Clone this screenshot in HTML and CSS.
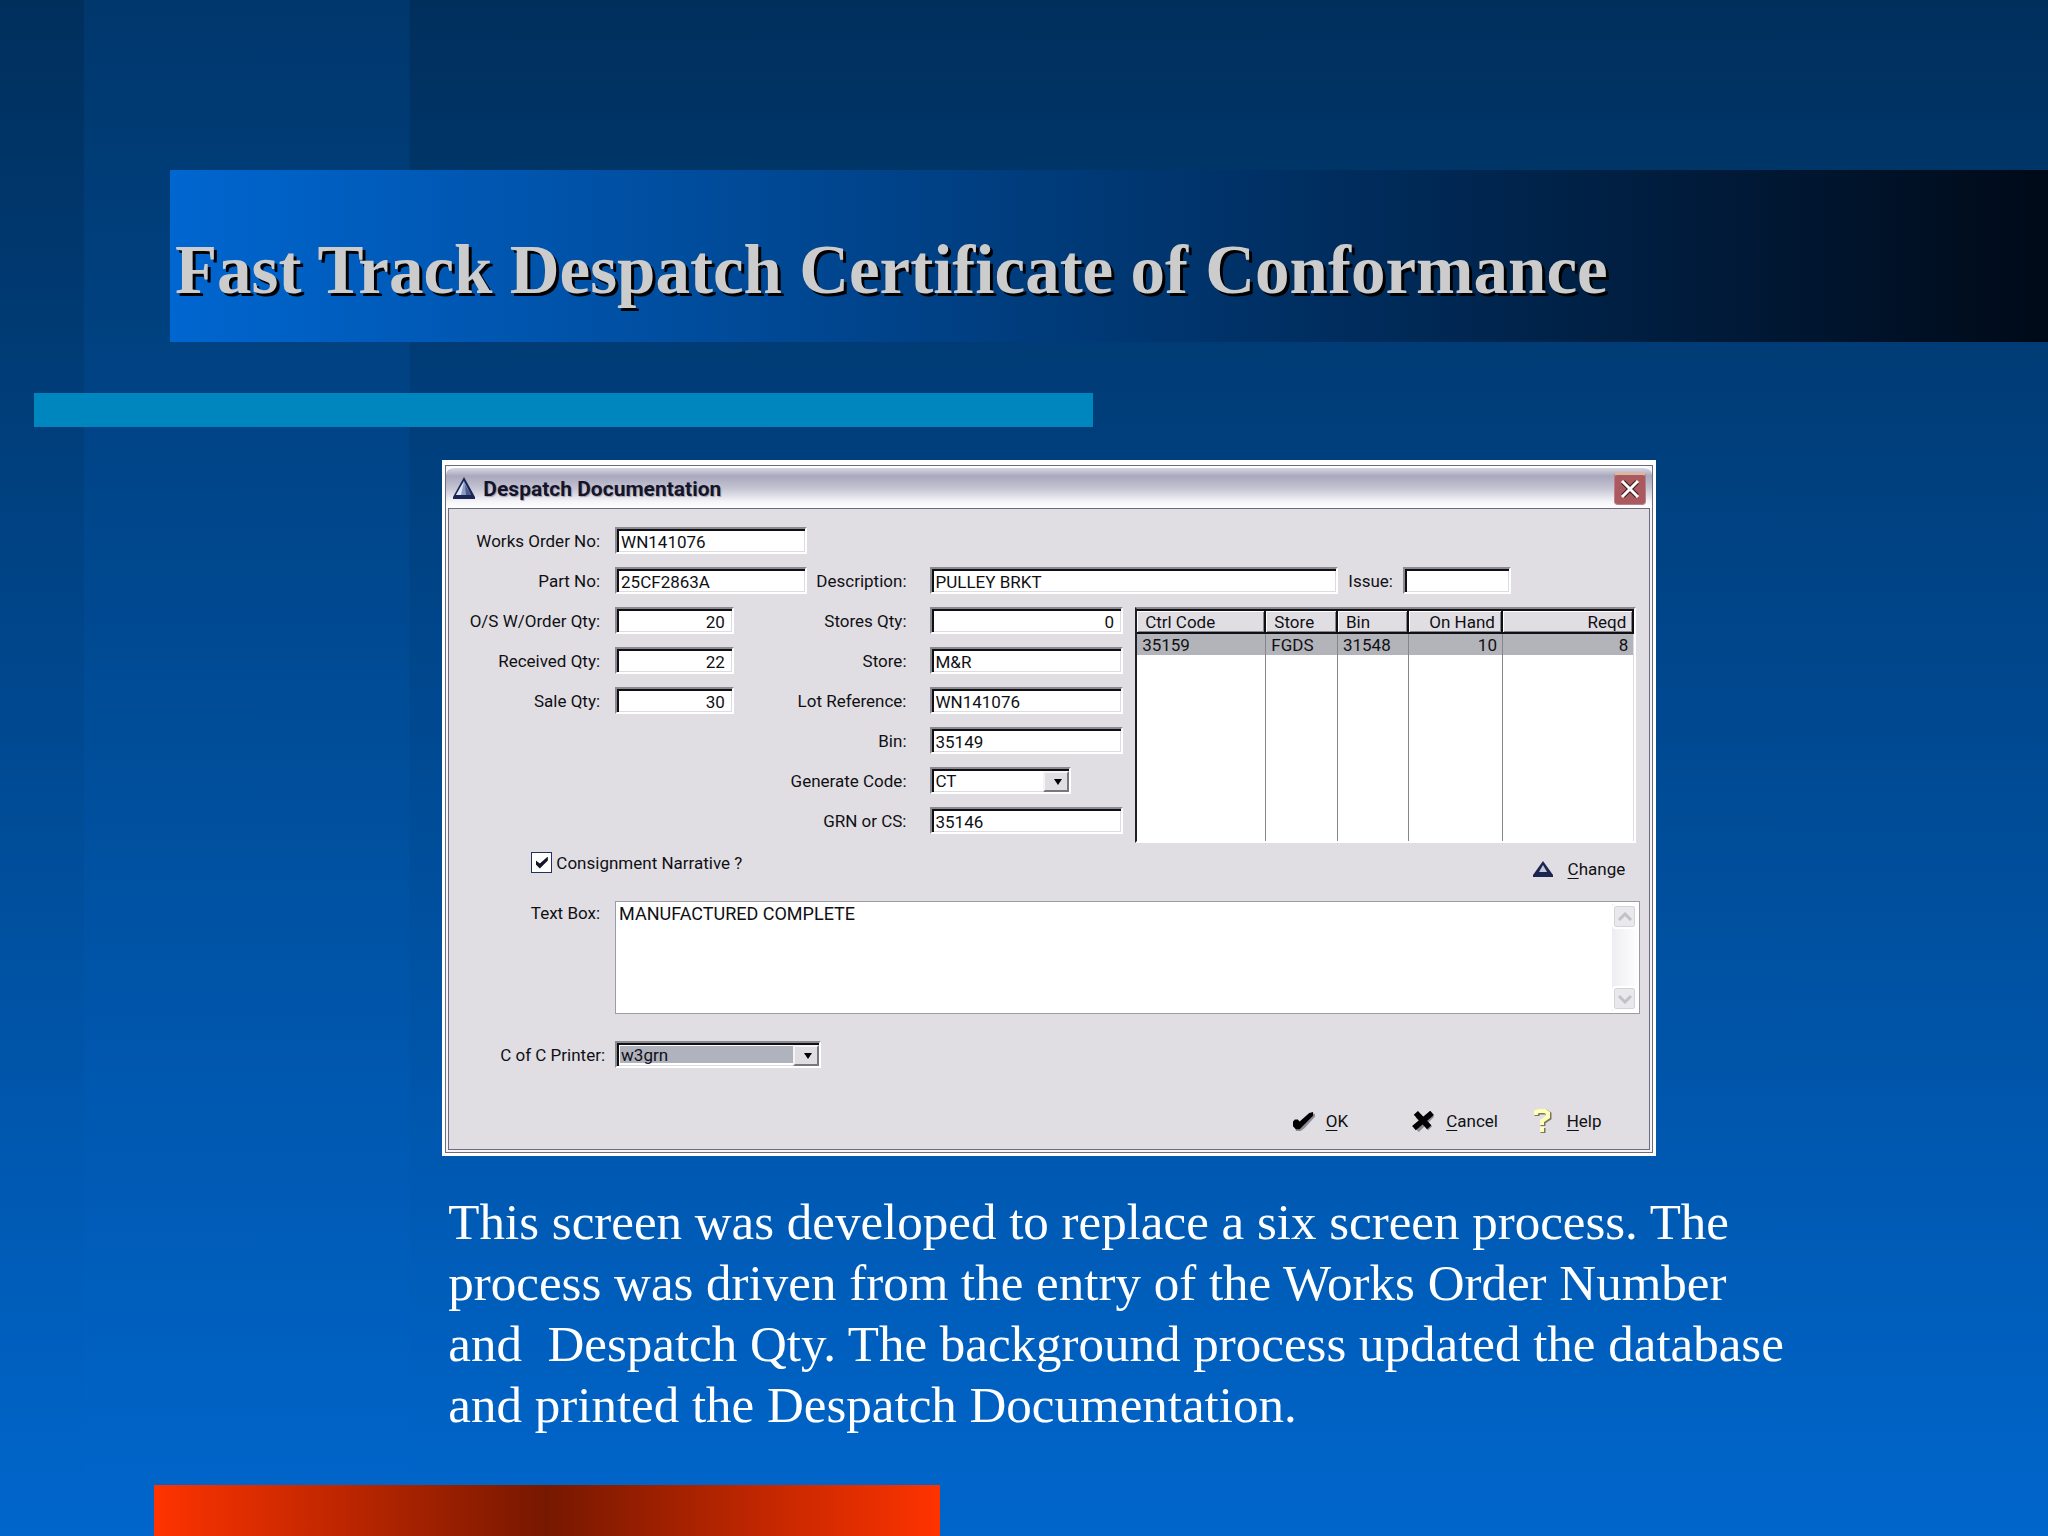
FILE: index.html
```html
<!DOCTYPE html>
<html lang="en">

<head>
	<meta charset="UTF-8">
	<meta name="viewport" content="width=device-width, initial-scale=1.0">
	<title>Fast Track Despatch Certificate of Conformance</title>
	<link rel="stylesheet" href="styles.css">
</head>

<body>
	<div class="slide">
		<header class="banner">
			<h1>Fast Track Despatch Certificate of Conformance</h1>
		</header>
		<div class="rule"></div>

		<main>
			<section class="dialog">
				<div class="frame">
					<div class="titlebar">
						<svg class="logo" viewBox="0 0 22 22">
							<path d="M11 0L22 20V22H0V20Z" fill="#1c2656" />
							<path d="M11 4L18 18H3Z" fill="#8d9cc4" />
							<path d="M11 4L3 18H8Z" fill="#dfe6f4" />
							<path d="M12 8L18 18H13Z" fill="#4a5a8e" />
						</svg>
						<h2>Despatch Documentation</h2>
						<button class="close" type="button" aria-label="Close">
							<svg viewBox="0 0 20 20">
								<path d="M3 3L17 17M17 3L3 17" stroke="#3c1418" stroke-width="5" />
								<path d="M2 2L18 18M18 2L2 18" stroke="#fff" stroke-width="3" />
							</svg>
						</button>
					</div>

					<form class="body">
						<div class="fields">
							<label class="l1 r1" for="order">Works Order No:</label>
							<input class="c1 r1" id="order" type="text" value="WN141076">
							<label class="l1 r2" for="part">Part No:</label>
							<input class="c1 r2" id="part" type="text" value="25CF2863A">
							<label class="l1 r3" for="os">O/S W/Order Qty:</label>
							<input class="c1 r3 num short" id="os" type="text" value="20">
							<label class="l1 r4" for="received">Received Qty:</label>
							<input class="c1 r4 num short" id="received" type="text" value="22">
							<label class="l1 r5" for="sale">Sale Qty:</label>
							<input class="c1 r5 num short" id="sale" type="text" value="30">

							<label class="l2 r2" for="desc">Description:</label>
							<div class="wide r2">
								<input class="desc" id="desc" type="text" value="PULLEY BRKT">
								<label for="issue">Issue:</label>
								<input class="issue" id="issue" type="text">
							</div>
							<label class="l2 r3" for="storesqty">Stores Qty:</label>
							<input class="c2 r3 num" id="storesqty" type="text" value="0">
							<label class="l2 r4" for="store">Store:</label>
							<input class="c2 r4" id="store" type="text" value="M&amp;R">
							<label class="l2 r5" for="lot">Lot Reference:</label>
							<input class="c2 r5" id="lot" type="text" value="WN141076">
							<label class="l2 r6" for="bin">Bin:</label>
							<input class="c2 r6" id="bin" type="text" value="35149">
							<label class="l2 r7" for="code">Generate Code:</label>
							<div class="select code c2 r7">
								<select id="code">
									<option>CT</option>
								</select>
							</div>
							<label class="l2 r8" for="grn">GRN or CS:</label>
							<input class="c2 r8" id="grn" type="text" value="35146">

							<div class="grid">
								<table>
									<colgroup>
										<col class="ctrl">
										<col class="st">
										<col class="bn">
										<col class="hand">
										<col>
									</colgroup>
									<thead>
										<tr>
											<th>Ctrl Code</th>
											<th>Store</th>
											<th>Bin</th>
											<th class="num">On Hand</th>
											<th class="num">Reqd</th>
										</tr>
									</thead>
									<tbody>
										<tr class="on">
											<td>35159</td>
											<td>FGDS</td>
											<td>31548</td>
											<td class="num">10</td>
											<td class="num">8</td>
										</tr>
										<tr class="rest">
											<td></td>
											<td></td>
											<td></td>
											<td></td>
											<td></td>
										</tr>
									</tbody>
								</table>
							</div>
						</div>

						<div class="narrative">
							<label class="check"><input type="checkbox" checked>Consignment Narrative ?</label>
							<button class="tool" type="button">
								<svg class="change" viewBox="0 0 20 16">
									<path d="M10 0L20 14V16H0V14Z" fill="#1c2550" />
									<path d="M10 4L14 11H6Z" fill="#c3cade" />
								</svg>
								<span><u>C</u>hange</span>
							</button>
						</div>

						<div class="fields textrow">
							<label class="l1" for="text">Text Box:</label>
							<div class="textbox">
								<textarea id="text">MANUFACTURED COMPLETE</textarea>
								<div class="scroll">
									<button type="button" aria-label="Scroll up">
										<svg viewBox="0 0 14 10"><path d="M1 8L7 2L13 8" /></svg>
									</button>
									<button type="button" aria-label="Scroll down">
										<svg viewBox="0 0 14 10"><path d="M1 2L7 8L13 2" /></svg>
									</button>
								</div>
							</div>
						</div>

						<div class="fields printrow">
							<label class="l1" for="printer">C of C Printer:</label>
							<div class="select printer">
								<select id="printer">
									<option>w3grn</option>
								</select>
							</div>
						</div>

						<div class="actions">
							<button class="tool" type="button">
								<svg viewBox="0 0 24 22">
									<path d="M3 12L8 13L20 3H24V6L13 18L9 21H4Z" fill="#8d8c94" />
									<path d="M1 11L3 9H6L8 11L18 2L22 1V5L11 16L8 19H4L1 16Z" fill="#000" />
								</svg>
								<span><u>O</u>K</span>
							</button>
							<button class="tool" type="button">
								<svg viewBox="0 0 24 22">
									<path d="M6 5L19 18M21 4L5 20" stroke="#8d8c94" stroke-width="6" />
									<path d="M4 2L18 17M21 2L2 18" stroke="#000" stroke-width="6" />
								</svg>
								<span><u>C</u>ancel</span>
							</button>
							<button class="tool" type="button">
								<svg class="help" viewBox="0 0 18 24">
									<path d="M3 7V4L6 3H12L15 5V9L9 13V17M9 19V24" fill="none" stroke="#77775c" stroke-width="5" />
									<path d="M2 6V3L5 2H11L14 4V8L8 12V16M8 18V23" fill="none" stroke="#ffffb8" stroke-width="4" />
								</svg>
								<span><u>H</u>elp</span>
							</button>
						</div>
					</form>
				</div>
			</section>

			<p class="note">This screen was developed to replace a six screen process. The process was driven from the entry of the Works Order Number and&nbsp; Despatch Qty. The background process updated the database and printed the Despatch Documentation.</p>
		</main>

		<footer></footer>
	</div>
</body>

</html>
```

FILE: styles.css
```css
* {
	box-sizing: border-box;
}

body {
	margin: 0;
}

.slide {
	display: flex;
	flex-direction: column;
	min-height: 100vh;
	padding-top: 170px;
	background:
		linear-gradient(rgba(0, 102, 204, 0.15), rgba(0, 102, 204, 0.1)) 4.9% 0 / 15.9% 100% no-repeat,
		linear-gradient(#002f5c, #0066cc);
}

.banner {
	display: flex;
	align-items: flex-end;
	height: 172px;
	margin-left: 8.3%;
	padding: 0 0 34px 5px;
	background: linear-gradient(90deg, #0066d0, #000a18);
}

h1 {
	margin: 0;
	font: bold 69px/76px "Liberation Serif", serif;
	color: #cccccc;
	text-shadow: 3px 3px 0 #000;
}

.rule {
	width: 51.7%;
	height: 34px;
	margin: 51px 0 33px 34px;
	background: #0086be;
}

main {
	margin-left: 21.6%;
}

/* dialog window */
.dialog {
	width: 75.6%;
	padding: 5px 3px 3px;
	background: #fff;
	font: 17px/20px Roboto, sans-serif;
	color: #101014;
}

.frame {
	padding: 0 2px 2px;
	border: 1px solid #6c6c78;
	background: #f4f4f8;
}

.titlebar {
	display: flex;
	align-items: center;
	gap: 8px;
	height: 42px;
	margin: 0 -2px;
	padding: 0 6px 0 7px;
	border-top: 2px solid #fff;
	border-radius: 8px 8px 0 0;
	background: linear-gradient(#d8d8e2, #a9a8bd 20%, #c3c3d2 50%, #f6f6fa 85%, #fff);
}

.logo {
	width: 22px;
	height: 22px;
}

h2 {
	flex: 1;
	margin: 0;
	padding-top: 2px;
	font: bold 21px/24px Roboto, sans-serif;
	color: #14142a;
	text-shadow: 1px 1px 1px #a0a0b0;
}

.close {
	display: flex;
	align-items: center;
	justify-content: center;
	width: 32px;
	height: 33px;
	padding: 0;
	border: 1px solid #b88088;
	border-top: 3px solid #d9b7a4;
	border-radius: 4px;
	background: #aa5a5f;
}

.close svg {
	width: 20px;
	height: 20px;
}

.body {
	padding: 18px 0 16px;
	border: 1px solid #6c6c80;
	background: #e0dee3;
}

.fields {
	display: grid;
	grid-template-columns:
		minmax(0, 166fr) minmax(0, 192fr) minmax(0, 123fr) minmax(0, 194fr)
		minmax(0, 12fr) minmax(0, 502fr) minmax(0, 13fr);
	grid-auto-rows: 27px;
	row-gap: 13px;
	align-items: center;
}

.l1,
.l2 {
	justify-self: end;
	white-space: nowrap;
}

.l1 {
	grid-column: 1;
	padding-right: 15px;
}

.l2 {
	grid-column: 3;
	padding-right: 23px;
}

.c1 {
	grid-column: 2;
}

.c2 {
	grid-column: 4;
}

.r1 { grid-row: 1; }
.r2 { grid-row: 2; }
.r3 { grid-row: 3; }
.r4 { grid-row: 4; }
.r5 { grid-row: 5; }
.r6 { grid-row: 6; }
.r7 { grid-row: 7; }
.r8 { grid-row: 8; }

input[type="text"],
.select {
	width: 100%;
	min-width: 0;
	height: 27px;
	border: 2px solid;
	border-color: #8a8a90 #fff #fff #8a8a90;
	background: #fff;
	box-shadow: inset 2px 2px 0 #101014, inset -1px -1px 0 #dcdce0;
}

input[type="text"] {
	padding: 2px 7px 0 4px;
	font: inherit;
	color: inherit;
}

.num {
	text-align: right;
}

input.short {
	width: 62%;
}

.wide {
	grid-column: 4 / 7;
	display: flex;
	align-items: center;
	width: 82.3%;
}

.wide .desc {
	flex: 1;
}

.wide .issue {
	width: 18.6%;
}

.wide label {
	margin: 0 10px;
}

/* drop-downs */
.select {
	position: relative;
	padding: 2px;
}

.select select {
	display: block;
	width: 100%;
	height: 100%;
	padding: 0 24px 0 2px;
	border: 0;
	border-radius: 0;
	appearance: none;
	background: transparent;
	font: inherit;
	color: inherit;
}

.select::before {
	content: "";
	position: absolute;
	top: 2px;
	right: 0;
	bottom: 0;
	width: 22px;
	border: 2px solid;
	border-color: #f4f4f6 #77777d #77777d #f4f4f6;
	background: #e0dee3;
	pointer-events: none;
}

.select::after {
	content: "";
	position: absolute;
	top: 10px;
	right: 7px;
	border: 4px solid transparent;
	border-top: 6px solid #000;
	border-bottom: 0;
	pointer-events: none;
}

.select.code {
	width: 73%;
}

.select.printer {
	grid-column: 2 / 4;
	width: 65.5%;
}

.select.printer select {
	background: #b0b2be;
	box-shadow: inset 0 0 0 1px #fff;
}

/* stock list */
.grid {
	grid-column: 6;
	grid-row: 3 / 9;
	align-self: start;
	height: 236px;
	border: 2px solid;
	border-color: #8a8a90 #fff #fff #202024;
	background: #fff;
}

table {
	width: 100%;
	height: 100%;
	border-collapse: separate;
	border-spacing: 0;
	table-layout: fixed;
}

.ctrl { width: 26%; }
.st { width: 14.4%; }
.bn { width: 14.2%; }
.hand { width: 19%; }

th,
td {
	padding: 0 5px;
	text-align: left;
	font-weight: normal;
	border-right: 1px solid #85858c;
}

th {
	height: 25px;
	padding: 0 6px 0 8px;
	border: solid #101014;
	border-width: 2px 2px 2px 0;
	background: #e0dee3;
	box-shadow: inset 1px 1px 0 #fff, inset -1px -1px 0 #85858c;
}

td:last-child {
	border-right-color: #dcdce0;
}

th.num,
td.num {
	text-align: right;
}

.on td {
	height: 21px;
	background: #b3b3ba;
}

.narrative {
	display: flex;
	align-items: center;
	justify-content: space-between;
	height: 27px;
	margin-top: 15px;
	padding: 0 24px 0 82px;
}

.check {
	display: flex;
	align-items: center;
	gap: 4px;
}

.check input {
	display: grid;
	place-items: center;
	width: 21px;
	height: 21px;
	margin: 0;
	appearance: none;
	border: 1px solid #24305e;
	background: #fff;
}

.check input:checked::before {
	content: "";
	width: 12px;
	height: 12px;
	background: #14142a;
	clip-path: polygon(0 33%, 33% 58%, 100% 0, 100% 33%, 33% 100%, 0 67%);
}

.tool {
	display: flex;
	align-items: center;
	padding: 0;
	border: 0;
	background: none;
	font: inherit;
	color: inherit;
}

.tool svg {
	width: 23px;
	height: 21px;
	margin-right: 11px;
}

.tool u {
	text-underline-offset: 3px;
}

.tool svg.change {
	width: 20px;
	height: 16px;
	margin-right: 15px;
}

.tool svg.help {
	width: 18px;
	height: 24px;
	margin-right: 15px;
}

.narrative .tool {
	align-self: flex-end;
	margin-bottom: -3px;
}

.textrow {
	grid-auto-rows: auto;
	align-items: start;
	margin-top: 25px;
}

.textrow .l1 {
	padding-top: 2px;
}

.textbox {
	grid-column: 2 / 7;
	display: flex;
	height: 113px;
	margin-right: -4px;
	padding: 2px;
	border: 1px solid #9c9ca4;
	background: #fff;
}

textarea {
	flex: 1;
	padding: 0 1px;
	border: 0;
	resize: none;
	background: transparent;
	font: 18px/20px Roboto, sans-serif;
	color: inherit;
}

.scroll {
	display: flex;
	flex-direction: column;
	justify-content: space-between;
	width: 25px;
	background: linear-gradient(90deg, #eeeef2, #fdfdfd);
}

.scroll button {
	height: 25px;
	padding: 0;
	border: 2px solid #fff;
	border-radius: 4px;
	background: #e9e9ed;
	box-shadow: inset 0 0 0 1px #d4d4d8;
}

.scroll svg {
	display: block;
	width: 14px;
	height: 10px;
	margin: auto;
	fill: none;
	stroke: #c2c2c6;
	stroke-width: 3;
}

.printrow {
	margin-top: 27px;
}

.printrow .l1 {
	padding-right: 10px;
}

.actions {
	display: grid;
	grid-template-columns: 121fr 122fr 116fr;
	width: 29.8%;
	height: 24px;
	margin: 41px 0 0 auto;
}

.note {
	width: 84.2%;
	margin: 36px 0 0 6px;
	font: 51px/61px "Liberation Serif", serif;
	color: #fff;
}

footer {
	width: 38.4%;
	height: 51px;
	margin: auto 0 0 7.5%;
	background: linear-gradient(90deg, #ff3300, #761800 50%, #ff3300);
}
```
